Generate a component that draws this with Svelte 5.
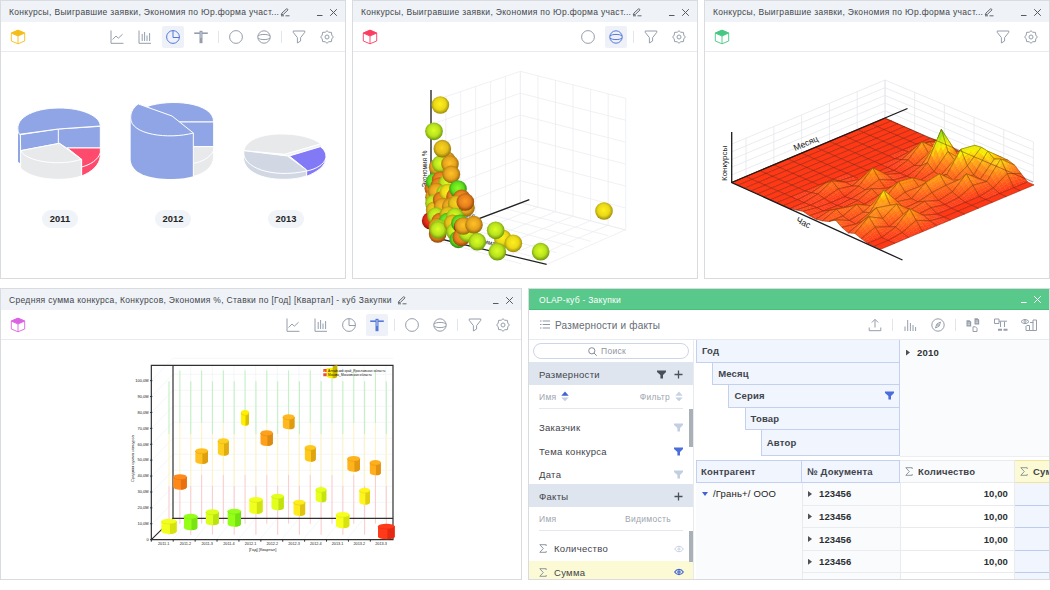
<script>
  const title = 'Конкурсы, Выигравшие заявки, Экономия по Юр.форма участ...';

  // ---- bubble chart ----
  const tones = {
    y: ['#fff01c', '#ead818', '#9a8a06'],
    l: ['#daff22', '#b9e21e', '#6c960a'],
    o: ['#ffc226', '#e6a21e', '#94660a'],
    a: ['#ff9a22', '#e47e1c', '#8e440a'],
    g: ['#86ff22', '#5fdc1e', '#2c840e'],
    r: ['#ff4a22', '#dc2a14', '#841208'],
    d: ['#fcd41e', '#e2bc1a', '#8e740a']
  };
  const balls = [
    [121, 135, 'y'], [102, 214, 'l'], [612, 453, 'y'],
    [92, 482, 'r'], [100, 385, 'a'], [140, 300, 'o'], [113, 322, 'o'], [122, 312, 'l'], [127, 266, 'd'],
    [150, 312, 'o'], [104, 365, 'g'], [122, 360, 'a'], [102, 412, 'o'], [118, 378, 'a'], [142, 370, 'l'],
    [154, 343, 'o'], [110, 395, 'o'], [102, 430, 'l'], [135, 400, 'l'], [104, 450, 'd'], [125, 420, 'a'],
    [145, 398, 'y'], [165, 410, 'a'], [128, 440, 'o'], [174, 387, 'g'], [152, 440, 'o'], [185, 415, 'a'],
    [172, 448, 'l'], [190, 435, 'a'], [198, 443, 'o'], [170, 432, 'd'], [196, 426, 'a'], [108, 468, 'l'],
    [120, 485, 'a'], [112, 500, 'o'], [145, 465, 'd'], [142, 485, 'g'], [165, 470, 'l'], [113, 522, 'a'],
    [118, 505, 'l'], [115, 510, 'l'], [158, 490, 'd'], [165, 515, 'l'], [180, 490, 'g'], [188, 500, 'r'],
    [175, 538, 'g'], [184, 532, 'a'], [202, 520, 'l'], [190, 498, 'o'], [222, 494, 'o'], [232, 545, 'l'],
    [308, 535, 'y'], [287, 511, 'l'], [340, 550, 'y'], [292, 575, 'l'], [422, 575, 'l']
  ];

  // ---- surface chart ----
  const MU = 11, MV = 23;
  const peaks = [
    [9, 13, 38], [9, 10, 17], [10, 9, 8], [9, 16, 27], [10, 16, 25], [10, 17, 26], [10, 18, 25], [10, 19, 20], [10, 20, 23], [11, 18, 13], [11, 19, 13], [11, 20, 11],
    [5, 11, 17], [3, 9, 10], [3, 17, 24], [5, 15, 15], [6, 15, 13], [7, 17, 17], [6, 17, 14], [8, 19, 17],
    [2, 18, 15], [3, 19, 16], [3, 21, 17], [1, 19, 15], [1, 14, 8], [0, 16, 9], [0, 11, 3], [2, 15, 10], [4, 13, 8], [5, 19, 7]
  ];
  const height = (u, v) => {
    let h = 0;
    for (const [a, b, p] of peaks) {
      const du = Math.abs(u - a), dv = Math.abs(v - b) * 0.7;
      h = Math.max(h, p * Math.max(0, 1 - Math.hypot(du, dv) * 0.72));
    }
    return h;
  };
  const H = Array.from({ length: MU + 1 }, (_, u) => Array.from({ length: MV + 1 }, (_, v) => height(u, v)));
  const pt = (u, v, h) => `${(731.7 + 13.94 * u + 6.48 * v).toFixed(2)},${(182.3 - 5.85 * u + 2.91 * v - h).toFixed(2)}`;
  const heat = (h) => {
    const stops = [[0, 255, 56, 22], [8, 255, 108, 22], [16, 255, 165, 20], [23, 250, 240, 10], [31, 190, 230, 20], [38, 60, 220, 40]];
    for (let i = 1; i < stops.length; i++) {
      if (h <= stops[i][0]) {
        const a = stops[i - 1], b = stops[i], t = (h - a[0]) / (b[0] - a[0]);
        return `rgb(${[1, 2, 3].map((k) => Math.round(a[k] + (b[k] - a[k]) * t)).join(',')})`;
      }
    }
    return 'rgb(60,220,40)';
  };
  const mesh = [];
  const N = 4;
  for (let u = MU - 1; u >= 0; u--) {
    for (let v = 0; v < MV; v++) {
      const z = (a, b) => H[u][v] * (1 - a) * (1 - b) + H[u + 1][v] * a * (1 - b) + H[u][v + 1] * (1 - a) * b + H[u + 1][v + 1] * a * b;
      const flat = z(0, 0) + z(1, 0) + z(0, 1) + z(1, 1) === 0;
      const n = flat ? 1 : N;
      for (let i = n - 1; i >= 0; i--) {
        for (let j = 0; j < n; j++) {
          const c = [[i, j], [i + 1, j], [i + 1, j + 1], [i, j + 1]].map(([a, b]) => [a / n, b / n]);
          mesh.push({ p: c.map(([a, b]) => pt(u + a, v + b, z(a, b))).join(' '), c: heat(z((i + 0.5) / n, (j + 0.5) / n)) });
        }
      }
      mesh.push({ p: [pt(u, v, H[u][v]), pt(u + 1, v, H[u + 1][v]), pt(u + 1, v + 1, H[u + 1][v + 1]), pt(u, v + 1, H[u][v + 1])].join(' '), c: null });
    }
  }

  // ---- cylinder chart: centre x, top, bottom, width, face, shade ----
  const cyl = [
    [636, 22, 70, 32, '#ffee00', '#c9b400'],
    [180, 358, 404, 41, '#ff8a1a', '#e87010'], [245, 280, 327, 38, '#ffc020', '#dea010'], [310, 250, 302, 33, '#ffcf20', '#deae10'],
    [375, 165, 212, 24, '#fff000', '#dcc000'], [440, 226, 273, 37, '#ffa01a', '#de8a10'], [506, 178, 223, 35, '#ffb820', '#de9c10'],
    [571, 270, 320, 33, '#ffc81c', '#dea410'], [701, 303, 350, 38, '#ffb41c', '#e29810'], [766, 315, 361, 33, '#ffae1c', '#e29210'],
    [147, 491, 537, 46, '#f2ff1e', '#d4e210'], [212, 476, 526, 40, '#96ff1a', '#7ae410'], [277, 463, 511, 39, '#dcff1e', '#bae210'],
    [343, 461, 515, 40, '#96ff1a', '#74e410'], [408, 426, 477, 40, '#f0ff1e', '#d0e210'], [473, 416, 466, 37, '#e2ff1e', '#c2e210'],
    [538, 434, 483, 35, '#ffec1e', '#e0c210'], [603, 396, 442, 32, '#e6ff1e', '#c6e210'], [668, 471, 520, 40, '#f6ff1e', '#d8e210'],
    [734, 398, 449, 32, '#fff41e', '#e0d010'], [799, 506, 553, 50, '#ff3a1a', '#e62a12']
  ];
  const cylPath = (x, t, b, w) => {
    const r = w / 2, k = 8;
    return `M${x - r} ${t + k}V${b - k}A${r} ${k} 0 0 0 ${x + r} ${b - k}V${t + k}Z`;
  };
  const quarters = ['2011.1', '2011.2', '2011.3', '2011.4', '2012.1', '2012.2', '2012.3', '2012.4', '2013.1', '2013.2', '2013.3'];

  const levels = ['Год', 'Месяц', 'Серия', 'Товар', 'Автор'];
  const full = ['line', 'bars', 'pie', 'cylinder', '|', 'circle', 'sphere', '|', 'funnel', 'gear'];
  const range = (n) => Array.from({ length: n }, (_, i) => i);
</script>

{#snippet icon(name)}
  <svg class="ic" width="16" height="16" viewBox="0 0 16 16">
    {#if name === 'line'}
      <path d="M2 1.5V14.3H14.5M3.6 10.5L7 7l2.3 2.2L13.6 5.2" />
    {:else if name === 'bars'}
      <path d="M2 1.5V14.3H14M5.2 5v7M7.6 3v9M10 6.5V12M12.6 4v8" />
    {:else if name === 'pie'}
      <circle cx="8" cy="8" r="6.4" /><path d="M8 1.6V8.5H14.4" />
    {:else if name === 'cylinder'}
      <path class="thick" d="M1.2 4.2H14.8" /><path class="core" d="M8 1.8V14.2" /><path class="slit" d="M8 3V9" />
    {:else if name === 'circle'}
      <circle cx="8" cy="8" r="6.4" />
    {:else if name === 'sphere'}
      <circle cx="8" cy="8" r="6.2" /><path d="M1.8 7C4 4.9 12 4.9 14.2 7M1.8 9C4 11.1 12 11.1 14.2 9" />
    {:else if name === 'funnel'}
      <path d="M2.2 2H13.8V3.3L9.6 8.6V12L6.4 14V8.6L2.2 3.3Z" />
    {:else if name === 'gear'}
      <path d="M8 1.7L9.7 3.2L12.4 3.4L12.8 6.1L14.3 8L12.8 9.9L12.4 12.6L9.7 12.8L8 14.3L6.3 12.8L3.6 12.6L3.2 9.9L1.7 8L3.2 6.1L3.6 3.4L6.3 3.2Z" stroke-linejoin="round" /><circle cx="8" cy="8" r="2" />
    {:else if name === 'share'}
      <path d="M8 10.5V2.6M4.8 5.5L8 2.3L11.2 5.5M2.2 10.5V13.7H13.8V10.5" />
    {:else if name === 'chart'}
      <path d="M3 9.5V14M5.7 3V14M8.4 6V14M11 8V14M13.6 10V14" />
    {:else if name === 'compass'}
      <circle cx="8" cy="8" r="6.2" /><path d="M10.5 5L9.2 9L5.5 11L6.8 7Z" /><circle cx="8" cy="8" r=".5" />
    {:else if name === 'docs'}
      <path class="fill" d="M1.5 3.2H4.6L6.2 4.8V9.4H1.5Z M9.5 1.2H12.6L14.2 2.8V7.4H9.5Z" /><path d="M8 9.8H10.5L12 11.3V14.5H8Z" /><path class="lines" d="M2.6 6h2.4M2.6 7.7h2.4M10.6 4h2.4M10.6 5.7h2.4" />
    {:else if name === 'scheme'}
      <path d="M1.5 2H6V6.5H1.5ZM6 4.2H14M7.5 4.5V10M11.5 4.5V10" /><path class="fill" d="M5 11.8H9V13.8H5ZM10.5 11.8H14.5V13.8H10.5Z" />
    {:else if name === 'eyechart'}
      <path d="M0 4.6C2.5 1.8 5.5 1.8 8 4.6C5.5 7.3 2.5 7.3 0 4.6ZM5 9V13.5H8.5V8.5H5.5M8.5 13.5H12V5.5H9M12 13.5H15.5V3H12V6" /><circle cx="4" cy="4.5" r="1" />
    {/if}
  </svg>
{/snippet}

{#snippet cube(color)}
  <svg width="16" height="16" viewBox="0 0 16 16" fill="none" stroke={color} stroke-width=".9" stroke-linejoin="round">
    <path d="M1.3 4.1L8 1.2L14.7 4.1V12L8 14.8L1.3 12ZM8 7V14.8" /><path d="M1.3 4.1L8 1.2L14.7 4.1L8 7Z" fill={color} />
  </svg>
{/snippet}

{#snippet head(text, pen)}
  <div class="head">
    <span>{text}</span>
    {#if pen}
      <svg class="pen" width="11" height="9" viewBox="0 0 11 9"><path d="M1.2 7L2 5L6.4 .9Q7.6 .5 8 1.9L3.6 6.2ZM1 7.8H4M5.5 7.8H9.5" /></svg>
    {/if}
    <svg class="ctl" width="21" height="9" viewBox="0 0 21 9"><path d="M0 7.5H5.5M13.2 1.2L19.8 7.8M19.8 1.2L13.2 7.8" /></svg>
  </div>
{/snippet}

{#snippet tools(list, active)}
  <div class="tools">
    {#each list as t}
      {#if t === '|'}<i class="sep"></i>{:else}<span class="tool" class:on={t === active}>{@render icon(t)}</span>{/if}
    {/each}
  </div>
{/snippet}

{#snippet funnel(cls)}
  <svg class={cls} width="9" height="9" viewBox="0 0 9 9"><path d="M0 .5H9V2L6 5V8.5H3.4V5L0 2Z" /></svg>
{/snippet}
{#snippet eye(cls)}
  <svg class={cls} width="10" height="8" viewBox="0 0 10 8"><path d="M.7 4C3 .4 7 .4 9.3 4C7 7.6 3 7.6 .7 4Z" /><circle cx="5" cy="4" r="1.1" /></svg>
{/snippet}
{#snippet plus()}
  <svg class="plus" width="9" height="9" viewBox="0 0 9 9"><path d="M4.5 .5V8.5M.5 4.5H8.5" /></svg>
{/snippet}
{#snippet sort(up)}
  <svg width="8" height="11" viewBox="0 0 8 11"><path d="M.3 4.8L4 .5L7.7 4.8Z" fill={up ? '#3f63d6' : '#c9d3e2'} /><path d="M.3 6.4L4 10.3L7.7 6.4Z" fill="#c3cfe2" /></svg>
{/snippet}
{#snippet sigma()}
  <svg class="sigma" width="8" height="9" viewBox="0 0 8 9"><path d="M7.2 2V.7H.8L4.3 4.5L.8 8.3H7.2V7" /></svg>
{/snippet}

<div class="desk">
  <div class="row top">
    <section class="win">
      {@render head(title, true)}
      <div class="bar">{@render cube('#f5bd18')}{@render tools(full, 'pie')}</div>
      <div class="pies">
        <svg class="plot" width="344" height="148" viewBox="1 52 344 148">
          <g transform="translate(0 90) scale(.33333)" stroke="#fff" stroke-width="3" stroke-linejoin="round">
            <path d="M54 115L60 133V220L54 215Z" fill="#90a5e5" stroke="none" />
            <path d="M61 134L175 117L301 109V174H200L178 160L62 182Z" fill="#90a5e5" />
            <path d="M58 133C36 88 96 54 177 54C250 54 301 80 301 108L175 117Z" fill="#90a5e5" />
            <path d="M175 118V159" fill="none" />
            <path d="M202 174H301V198C299 225 275 246 245 258V208Z" fill="#fe4a6c" />
            <path d="M301 189C293 210 272 224 245 231" fill="none" />
            <path d="M62 182L62 235C85 257 125 268 177 268C205 268 227 264 244 258V208Z" fill="#e8e9eb" />
            <path d="M62 182L178 160L244 208C185 228 82 218 62 182Z" fill="#e8e9eb" />
            <path d="M440 50C510 25 641 36 641 96H530Z" fill="#90a5e5" />
            <path d="M520 96H641V170H560Z" fill="#90a5e5" />
            <path d="M575 170H641V200C641 232 610 252 581 259Z" fill="#e8e9eb" />
            <path d="M641 182C628 206 602 216 581 220" fill="none" />
            <path d="M392 82V206C392 250 445 267 517 267C542 267 564 264 580 259V128L516 78L415 42C400 52 392 66 392 82Z" fill="#90a5e5" stroke="none" />
            <path d="M415 42L516 78L580 129C505 149 392 134 392 84C392 64 402 51 415 42ZM580 129V260" fill="#90a5e5" />
            <path d="M731 182C745 115 920 122 962 162L855 193Z" fill="#e8e9eb" />
            <path d="M962 162L966 170L862 198L855 193Z" fill="#f0f1f3" />
            <path d="M731 182V208C736 245 785 268 850 268C880 268 905 264 920 257V240L862 198Z" fill="#d1d8e4" />
            <path d="M731 184C726 232 815 266 920 243" fill="none" />
            <path d="M868 198L961 170C976 181 978 191 978 203C977 230 950 246 920 259V240Z" fill="#8279f7" />
            <path d="M978 203C973 224 946 238 920 243" fill="none" />
          </g>
        </svg>
        <div class="years"><b>2011</b><b>2012</b><b>2013</b></div>
      </div>
    </section>

    <section class="win">
      {@render head(title, true)}
      <div class="bar">{@render cube('#fb3d62')}{@render tools(['circle', 'sphere', '|', 'funnel', 'gear'], 'sphere')}</div>
      <svg class="plot" width="344" height="226" viewBox="353 52 344 226">
        <defs>
          {#each Object.entries(tones) as [k, c]}
            <radialGradient id={'b' + k} cx=".48" cy=".45" r=".55"><stop offset="0" stop-color={c[0]} /><stop offset=".6" stop-color={c[1]} /><stop offset="1" stop-color={c[2]} /></radialGradient>
          {/each}
        </defs>
        <g transform="translate(400 60) scale(.33333)" fill="none">
          <g stroke="#eceef1" stroke-width="2.4">
            {#each range(7) as i}
              <path d="M93 {125 + i * 68.5}L361 {34 + i * 65.6}L677 {115 + i * 65.8}" />
              <path d="M{361 + i * 52.7} {34 + i * 13.5}V{428 + i * 13.5}L{93 + i * 58} {535 + i * 13}" />
              <path d="M{361 - i * 44.7} {34 + i * 15}V{428 + i * 18}L{677 - i * 52} {510 + i * 17}" />
            {/each}
          </g>
          <path d="M93 90V530L440 613M93 530L388 419" stroke="#222" stroke-width="4" />
          <text transform="translate(82 382) rotate(-90)" font-size="19" fill="#222">Экономия %</text>
          <text transform="translate(199 480) rotate(-17)" font-size="19" fill="#222">тов</text>
          <text transform="translate(250 550) rotate(13)" font-size="19" fill="#222">мма лотов</text>
          {#each balls as [x, y, k]}<circle cx={x} cy={y} r="26.5" fill="url(#b{k})" />{/each}
        </g>
      </svg>
    </section>

    <section class="win">
      {@render head(title, true)}
      <div class="bar">{@render cube('#45c883')}{@render tools(['funnel', 'gear'], '')}</div>
      <svg class="plot" width="344" height="226" viewBox="705 52 344 226">
        <g fill="none" stroke="#e4e7eb" stroke-width=".8">
          {#each range(6) as i}
            <path d="M732 {144 + i * 7.7}L885 {80 + i * 7.7}L1033.5 {142 + i * 7.9}" />
            <path d="M{885 - i * 27.8} {80 + i * 11.7}V{118 + i * 11.7}M{885 + i * 19.4 * 1.53} {80 + i * 12.4}V{118 + i * 12.8}" />
          {/each}
        </g>
        {#each mesh as m}
          {#if m.c}<polygon points={m.p} fill={m.c} stroke={m.c} stroke-width=".35" />{:else}<polygon points={m.p} fill="none" stroke="#3a1606" stroke-opacity=".6" stroke-width=".5" />{/if}
        {/each}
        <path d="M731.7 132V182.5L902.5 260M731.7 182.5L907.5 108.5" fill="none" stroke="#1b1b1b" stroke-width="1.3" />
        <path d="M731.7 182.5L885 118.5L1033 182" fill="none" stroke="#3a1606" stroke-width=".4" />
        <text transform="translate(727 181) rotate(-90)" font-size="8" fill="#222">Конкурсы</text>
        <text transform="translate(795 151) rotate(-23)" font-size="8.6" fill="#222">Месяц</text>
        <text transform="translate(795.5 222) rotate(26)" font-size="8.6" fill="#222">Час</text>
      </svg>
    </section>
  </div>

  <div class="row bottom">
    <section class="win">
      {@render head('Средняя сумма конкурса, Конкурсов, Экономия %, Ставки по [Год] [Квартал] - куб Закупки', true)}
      <div class="bar">{@render cube('#db62e3')}{@render tools(full, 'cylinder')}</div>
      <svg class="plot" width="520" height="239" viewBox="1 340 520 239">
        <g transform="translate(120 355) scale(.33333)" fill="none">
          <g stroke="#eef1f5" stroke-width="2">
            {#each range(10) as i}
              <path d="M96 {507 - i * 48}L159 {442 - i * 48}H819M{212 + i * 65} 31V490L{160 + i * 65} 553" />
            {/each}
          </g>
          {#each range(21) as i}
            {@const x = 147 + i * 32.6}
            {@const s = i % 2 ? -33 : 0}
            <path d="M{x} {79 + s}V{237 + s}" stroke="#c4f1c5" stroke-width="3.4" />
            <path d="M{x} {237 + s}V{393 + s}" stroke="#fcf4c6" stroke-width="3.4" />
            <path d="M{x} {393 + s}V{539 + s}" stroke="#fbcfcf" stroke-width="3.4" />
          {/each}
          <path d="M94 31H819V554H94ZM159 31V490H819M94 554L159 490" stroke="#303030" stroke-width="3.6" />
          {#each range(11) as i}
            <path d="M90 {554 - i * 47.7}H97M{94 + i * 65.7} 554V560" stroke="#303030" stroke-width="3" />
            <text x="86" y={558 - i * 47.7} text-anchor="end" font-size="12" fill="#222">{i ? i * 10 + ',0M' : '0'}</text>
            <text x={131 + i * 65.2} y="570" text-anchor="middle" font-size="11.5" fill="#222">{quarters[i]}</text>
          {/each}
          <text x="428" y="588" text-anchor="middle" font-size="13" textLength="82" lengthAdjust="spacingAndGlyphs" fill="#222">[Год] [Квартал]</text>
          <text transform="translate(41 381) rotate(-90)" font-size="12.5" textLength="140" lengthAdjust="spacingAndGlyphs" fill="#222">Средняя сумма конкурса</text>
          {#each cyl as [x, t, b, w, c, d]}
            <path d={cylPath(x, t + (t < 31 ? 9 : 0), b, w)} fill={c} />
            <path d="M{x + w * 0.06} {t + 12}V{b}A{w * 0.44} 8 0 0 0 {x + w / 2} {b - 8}V{t + 8}Z" fill={d} />
            {#if t > 31}<ellipse cx={x} cy={t + 8} rx={w / 2} ry="8" fill={c} /><path d="M{x - w / 2} {t + 8}A{w / 2} 8 0 0 0 {x + w / 2} {t + 8}" stroke={d} stroke-width="1.5" />{/if}
          {/each}
          <path d="M610 42h10v9h-10zM610 55h10v9h-10z" fill="#f04545" /><path d="M610 47h6v4h-6z" fill="#ff9a00" />
          <text x="624" y="51" font-size="11" textLength="172" lengthAdjust="spacingAndGlyphs" fill="#111">Алтайский край_Ярославская область</text>
          <text x="624" y="64" font-size="11" textLength="131" lengthAdjust="spacingAndGlyphs" fill="#111">Москва_Московская область</text>
        </g>
      </svg>
    </section>

    <section class="win olap">
      {@render head('OLAP-куб - Закупки', false)}
      <div class="bar">
        <svg class="list" width="10" height="9" viewBox="0 0 10 9"><path d="M0 1H1.5M2.7 1H10M0 4.5H1.5M2.7 4.5H10M0 8H1.5M2.7 8H10" /></svg>
        <span class="caption">Размерности и факты</span>
        {@render tools(['share', '|', 'chart', 'compass', '|', 'docs', 'scheme', 'eyechart'], '')}
      </div>
      <div class="cubebody">
        <aside>
          <div class="search"><svg width="9" height="9" viewBox="0 0 9 9"><circle cx="3.8" cy="3.8" r="3.1" /><path d="M6.1 6.1L8.7 8.7" /></svg>Поиск</div>
          <div class="group">Размерности<em></em>{@render funnel('fn dark')}{@render plus()}</div>
          <div class="cols">Имя {@render sort(true)}<em></em>Фильтр {@render sort(false)}</div>
          <div class="items dims">
            <div>Заказчик<em></em>{@render funnel('fn pale')}</div>
            <div>Тема конкурса<em></em>{@render funnel('fn blue')}</div>
            <div>Дата<em></em>{@render funnel('fn pale')}</div>
          </div>
          <div class="group">Факты<em></em>{@render plus()}</div>
          <div class="cols facts">Имя<em></em>Видимость</div>
          <div class="items meas">
            <div>{@render sigma()}Количество<em></em>{@render eye('eye pale')}</div>
            <div class="hot">{@render sigma()}Сумма<em></em>{@render eye('eye blue')}</div>
          </div>
        </aside>
        <div class="pivot">
          <div class="upper">
            <div class="levels">
              {#each levels as l, i}
                <div class="level" style="margin-left:{i * 16.2}px">{l}{#if i === 2}<em></em>{@render funnel('fn blue')}{/if}</div>
              {/each}
            </div>
            <div class="colhead"><i class="tri"></i>2010</div>
          </div>
          <div class="table">
            <div class="th key">Контрагент</div><div class="th key">№ Документа</div>
            <div class="th">{@render sigma()}Количество</div><div class="th sum">{@render sigma()}Сумма</div>
            <div class="party"><i class="tri down"></i>/Грань+/ ООО</div>
            {#each range(5) as i}
              <div class="td doc">{#if i < 4}<i class="tri"></i>123456{/if}</div>
              <div class="td num">{#if i < 4}10,00{/if}</div>
              <div class="td tot"></div>
            {/each}
          </div>
        </div>
      </div>
    </section>
  </div>
</div>

<style>
  :global(body) { background: #fff; }
  .desk { width: 1050px; height: 590px; display: flex; flex-direction: column; gap: 9px; overflow: hidden; font-family: 'Liberation Sans', Arial, sans-serif; color: #3f444b; }
  .desk * { box-sizing: border-box; }
  .row { display: grid; gap: 6px; }
  .top { grid-template-columns: repeat(3, 346px); height: 279px; }
  .bottom { grid-template-columns: repeat(2, 522px); height: 292px; }
  .win { border: 1px solid #d9dbde; background: #fff; display: flex; flex-direction: column; overflow: hidden; min-width: 0; }
  .head { height: 21px; flex: none; background: #eff2f6; display: flex; align-items: center; padding: 1px 8px 0 8px; font-size: 8.5px; letter-spacing: .325px; color: #42464c; white-space: nowrap; }
  .bottom .head { letter-spacing: .315px; }
  .pen { margin-left: 1px; fill: none; stroke: #555b63; stroke-width: .9; }
  .bottom .pen { margin-left: 5px; }
  .ctl { margin-left: auto; margin-right: -1px; fill: none; stroke: #555a61; stroke-width: 1; }
  .bar { height: 30px; flex: none; border-bottom: 1px solid #e7eaee; display: flex; align-items: center; padding: 0 7px 0 9px; }
  .tools { margin-left: auto; display: flex; align-items: center; gap: 6px; }
  .tool { width: 22px; height: 22px; display: grid; place-items: center; border-radius: 2px; color: #959eaa; }
  .tool.on { background: #eef2f8; color: #5577dc; }
  .sep { width: 1px; height: 12px; background: #e1e5ec; }
  .ic { fill: none; stroke: currentColor; stroke-width: 1; }
  .ic .thick { stroke-width: 1.6; }
  .ic .core { stroke-width: 3; }
  .ic .slit { stroke: #c6d0e4; stroke-width: 1; }
  .ic .fill { fill: currentColor; stroke: none; }
  .ic .lines { stroke: #fff; stroke-width: .6; }
  .plot { display: block; flex: none; }
  .years { display: flex; gap: 77px; padding: 10px 0 0 41px; }
  .years b { width: 36px; height: 18px; border-radius: 9px; background: #f0f3f7; font-size: 9.3px; line-height: 19px; letter-spacing: .1px; text-align: center; color: #222; }

  .olap .head { background: #59c88b; color: #fff; padding-left: 10px; letter-spacing: .28px; border-bottom: 1px solid #45bf7c; }
  .olap .ctl { stroke: #fff; }
  .olap .bar { padding: 0 9px 0 11px; }
  .list { fill: none; stroke: #8d97a3; stroke-width: 1; }
  .caption { margin-left: 5px; font-size: 9.5px; letter-spacing: .2px; color: #666c75; padding-top: 1px; letter-spacing: .18px; font-size: 10px; }
  .cubebody { display: grid; grid-template-columns: 165px 353px; gap: 2px; flex: 1; min-height: 0; overflow: hidden; }
  aside { border-right: 1px solid #e7eaee; font-size: 9.5px; letter-spacing: .3px; display: flex; flex-direction: column; }
  em { flex: 1; }
  .search { margin: 3px 4px; height: 16px; flex: none; border: 1px solid #ccd6e6; border-radius: 8px; display: flex; align-items: center; justify-content: center; gap: 4px; color: #8f96a1; font-size: 8.5px; padding-right: 8px; }
  .search svg { fill: none; stroke: #848c98; stroke-width: 1; }
  .group { height: 23px; flex: none; background: #dfe5ee; display: flex; align-items: center; padding: 1px 10px 0; gap: 8px; }
  .cols { height: 24px; flex: none; margin: 0 10px; border-bottom: 1px solid #e4e7ec; display: flex; align-items: center; gap: 5px; font-size: 8.5px; color: #a0a6af; }
  .cols.facts { padding-right: 12px; }
  .items { display: flex; flex-direction: column; flex: none; }
  .items > div { height: 23.5px; flex: none; display: flex; align-items: center; padding: 0 10px; }
  .dims { height: 75px; padding-top: 7px; border-right: 4px solid; border-image: linear-gradient(#aab0b8 38px, transparent 38px) 1; border-top: 0; border-bottom: 0; border-left: 0; }
  .dims > div { padding-right: 6px; }
  .meas { height: 54px; padding-top: 6px; border: 0 solid; border-right-width: 4px; border-image: linear-gradient(#aab0b8 31px, #fcfad4 31px) 1; }
  .meas > div { padding-right: 5px; }
  .hot { background: #fcfad4; }
  .fn { fill: #c3cfe0; }
  .fn.dark { fill: #4b5058; }
  .fn.blue { fill: #4a6ddb; }
  .eye { fill: none; stroke: #c5d0e0; stroke-width: 1; }
  .eye.blue { stroke: #3f63d6; stroke-width: 1.2; }
  .plus { stroke: #4b5058; stroke-width: 1.3; }
  .sigma { fill: none; stroke: #858c96; stroke-width: .9; margin-right: 7px; flex: none; }

  .pivot { min-width: 0; overflow: hidden; display: flex; flex-direction: column; gap: 3px; font-size: 9.5px; letter-spacing: .18px; font-weight: bold; }
  .upper { display: grid; grid-template-columns: 204px 149px; height: 116.5px; flex: none; }
  .levels { display: flex; flex-direction: column; }
  .level { height: 23.6px; margin-top: -1px; flex: none; background: #f1f5fe; border: 1px solid #c3d0f0; display: flex; align-items: center; padding: 0 5px; }
  .level:last-child { height: 27px; }
  .colhead { background: #fafbfc; border-bottom: 1px solid #eceef1; padding: 7px 0 0 6px; height: 116.5px; color: #2f3338; display: flex; align-items: flex-start; line-height: 11px; }
  .tri { flex: none; width: 4px; height: 6px; margin-right: 7px; background: #4d5157; clip-path: polygon(0 0, 100% 50%, 0 100%); }
  .tri.down { width: 6px; height: 4px; margin-right: 5px; background: #3f63d6; clip-path: polygon(0 0, 100% 0, 50% 100%); }
  .colhead .tri { margin-top: 2.5px; }
  .table { display: grid; grid-template-columns: 106px 98px 115px 80px; grid-template-rows: 23.6px repeat(5, 22.6px); }
  .th { background: #fafbfc; border: 1px solid #e9ebee; border-left: 0; display: flex; align-items: center; padding: 0 5px; white-space: nowrap; }
  .th.key { background: #f1f5fe; border: 1px solid #c3d0f0; padding-left: 4px; }
  .th.key + .key { border-left: 0; padding-left: 5px; }
  .th.sum { background: #fcfad4; border-color: #f0e29f; }
  .th .sigma { margin-right: 5px; }
  .party { grid-row: 2 / 7; background: #fafbfc; font-weight: normal; padding: 5px 6px; color: #222; display: flex; align-items: flex-start; line-height: 12px; }
  .party .tri { margin-top: 4px; }
  .td { border-bottom: 1px solid #e9ebee; display: flex; align-items: center; color: #2b2f34; letter-spacing: .1px; }
  .doc { background: #fafbfc; border-left: 1px solid #e9ebee; padding-left: 5px; }
  .num { justify-content: flex-end; padding-right: 6px; border-left: 1px solid #e9ebee; border-right: 1px solid #e9ebee; }
  .tot { background: #f1f5fe; border-bottom-color: #bccbee; }
</style>
